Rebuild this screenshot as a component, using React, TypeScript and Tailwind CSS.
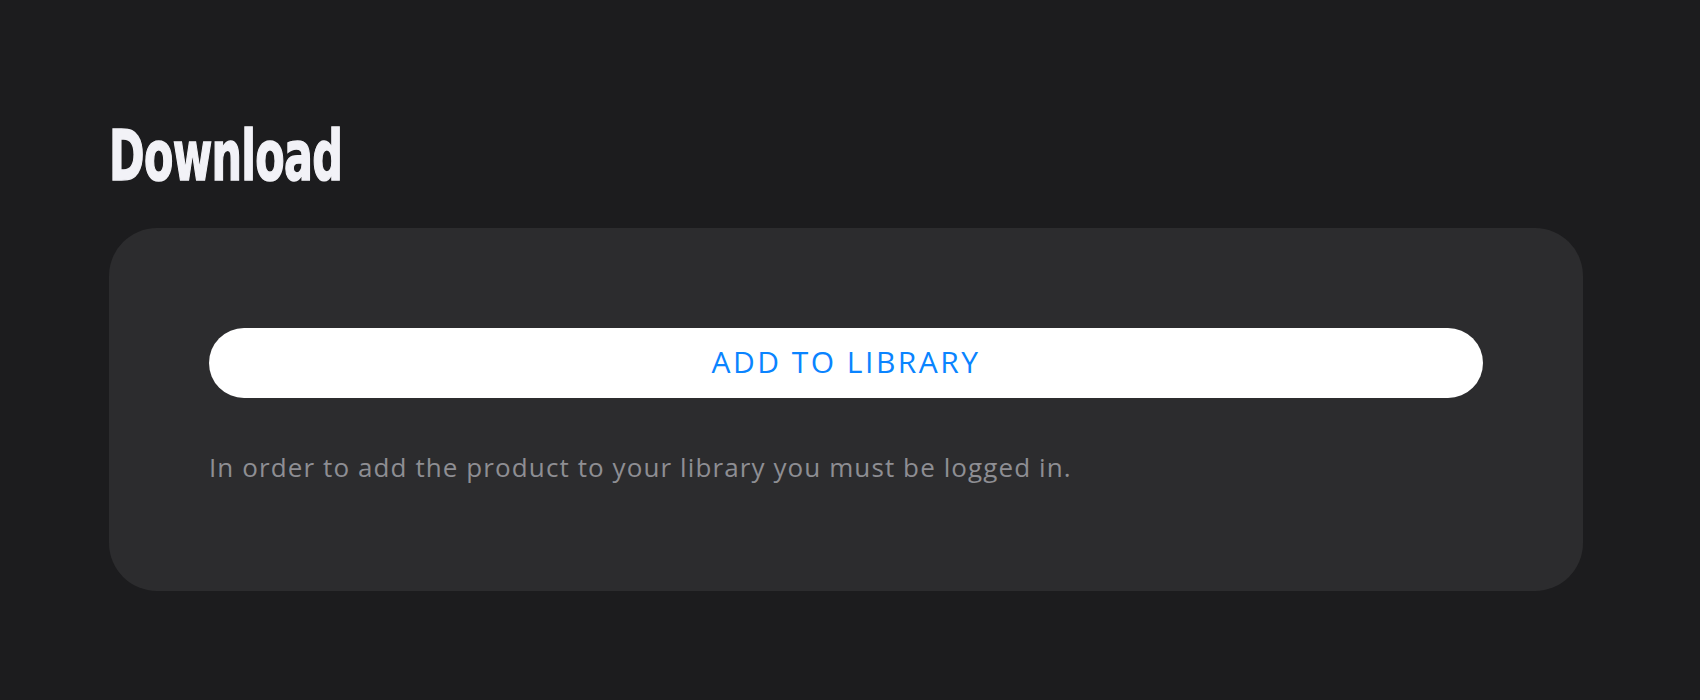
export default function App() {
  return (
    <div className="min-h-[700px] w-full bg-[#1c1c1e] pl-[109px] pr-[117px] pt-[121px]">
      <h1 className="origin-left scale-x-[0.68] text-[70px] font-bold leading-[70px] tracking-[-1px] text-[#f2f2f7] [-webkit-text-stroke:1.5px_#f2f2f7] [font-family:'Liberation_Sans_Narrow','DejaVu_Sans_Condensed',sans-serif]">
        Download
      </h1>
      <div className="mt-[37px] rounded-[48px] bg-[#2c2c2e] px-[100px] pb-[108px] pt-[100px]">
        <button className="flex h-[70px] w-full items-center justify-center rounded-full bg-white pb-[3px] text-[30px] font-medium tracking-[2.5px] text-[#0a84ff] [font-family:'Open_Sans',sans-serif]">
          ADD TO LIBRARY
        </button>
        <p className="mt-[53px] text-[26px] leading-[32px] tracking-[1.1px] text-[#8e8e93] [font-family:'Open_Sans',sans-serif]">
          In order to add the product to your library you must be logged in.
        </p>
      </div>
    </div>
  );
}
